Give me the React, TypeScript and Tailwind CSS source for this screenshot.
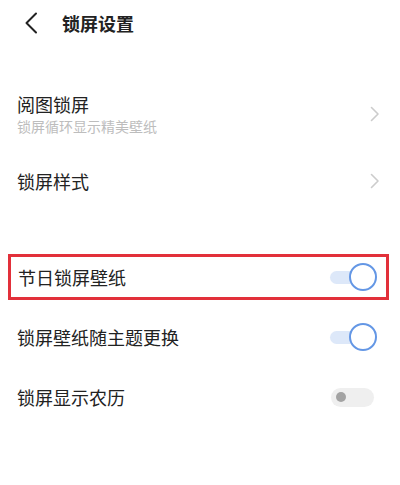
import React from 'react';

const font = { fontFamily: '"Noto Sans CJK SC", "Noto Sans", sans-serif' };

function Chevron() {
  return (
    <svg width="10" height="16" viewBox="0 0 10 16" fill="none">
      <path d="M1.5 1.5 L8 8 L1.5 14.5" stroke="#cccccc" strokeWidth="1.6" strokeLinecap="round" strokeLinejoin="round" />
    </svg>
  );
}

function ToggleOn() {
  return (
    <div className="relative w-[47px] h-[28px]">
      <div className="absolute left-0 top-[8px] w-[40px] h-[13px] rounded-full bg-[#dde8f9]" />
      <div className="absolute right-0 top-0 w-[28px] h-[28px] rounded-full bg-white border-[2.5px] border-[#6497e5]" />
    </div>
  );
}

function ToggleOff() {
  return (
    <div className="mr-[3px] w-[43px] h-[19px] rounded-full bg-[#efefef] flex items-center">
      <div className="ml-[5px] w-[10px] h-[10px] rounded-full bg-[#a3a3a3]" />
    </div>
  );
}

export default function App() {
  return (
    <div className="w-[400px] h-[485px] bg-white text-[#222222]" style={font}>
      {/* header */}
      <div className="h-[46px] flex items-center pl-[24px]">
        <svg width="14" height="22" viewBox="0 0 14 22" fill="none">
          <path d="M12 1.5 L2.5 11 L12 20.5" stroke="#222" strokeWidth="2" strokeLinecap="round" strokeLinejoin="round" />
        </svg>
        <span className="ml-[24px] text-[18px] leading-[22px] font-semibold">锁屏设置</span>
      </div>

      <div className="mt-[36px]">
        <div className="h-[64px] flex items-center justify-between pl-[17px] pr-[20px]">
          <div className="flex flex-col gap-[4px]">
            <span className="text-[18px] leading-[20px]">阅图锁屏</span>
            <span className="text-[14px] leading-[16px] text-[#bdbdbd]">锁屏循环显示精美壁纸</span>
          </div>
          <Chevron />
        </div>
        <div className="h-[70px] flex items-center justify-between pl-[17px] pr-[20px]">
          <span className="text-[18px] leading-[20px]">锁屏样式</span>
          <Chevron />
        </div>
      </div>

      <div className="mt-[38px] ml-[8px] w-[381px] h-[46px] border-[3px] border-[#e2303a] flex items-center justify-between pl-[7px] pr-[9px]">
        <span className="text-[18px] leading-[20px]">节日锁屏壁纸</span>
        <ToggleOn />
      </div>

      <div className="mt-[7px] h-[60px] flex items-center justify-between pl-[17px] pr-[23px]">
        <span className="text-[18px] leading-[20px]">锁屏壁纸随主题更换</span>
        <ToggleOn />
      </div>
      <div className="h-[60px] flex items-center justify-between pl-[17px] pr-[23px]">
        <span className="text-[18px] leading-[20px]">锁屏显示农历</span>
        <ToggleOff />
      </div>
    </div>
  );
}
